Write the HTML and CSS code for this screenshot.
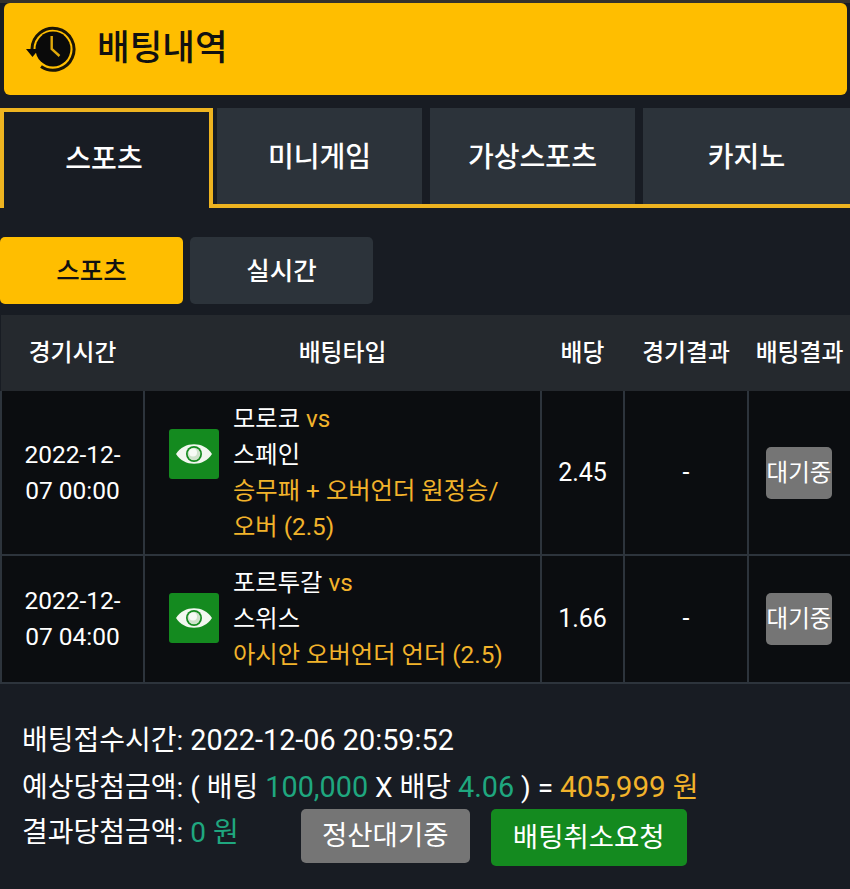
FILE: index.html
```html
<!DOCTYPE html>
<html lang="ko">
<head>
    <meta charset="UTF-8">
    <meta name="viewport" content="width=device-width, initial-scale=1.0">
    <title>배팅내역</title>
    <link rel="stylesheet" href="styles.css">
</head>
<body>
    <div class="page-title">
        <svg class="title-icon" viewBox="0 0 50 46">
            <circle cx="27" cy="23" r="17.5" fill="#0a0a0a"></circle>
            <path d="M6 23 A21 21 0 1 1 15 40.5" fill="none" stroke="#1a1505" stroke-width="3"></path>
            <path d="M0 23 H13 L6.5 31 Z" fill="#0a0a0a"></path>
            <path d="M25.7 10 V23 L33.5 30" fill="none" stroke="#e0a90a" stroke-width="2.4"></path>
        </svg>
        <h1 class="title">배팅내역</h1>
    </div>

    <div class="tabs">
        <a class="tab active">스포츠</a>
        <a class="tab">미니게임</a>
        <a class="tab">가상스포츠</a>
        <a class="tab last">카지노</a>
    </div>

    <div class="sub-tabs">
        <a class="sub-tab active">스포츠</a>
        <a class="sub-tab">실시간</a>
    </div>

    <table class="bet-table">
        <colgroup>
            <col class="col-time">
            <col class="col-type">
            <col class="col-odds">
            <col class="col-game">
            <col class="col-result">
        </colgroup>
        <thead>
            <tr>
                <th>경기시간</th>
                <th>배팅타입</th>
                <th>배당</th>
                <th>경기결과</th>
                <th>배팅결과</th>
            </tr>
        </thead>
        <tbody>
            <tr>
                <td class="time-cell">2022-12-<br>07 00:00</td>
                <td class="type-cell first">
                    <div class="type-wrap">
                        <span class="eye-btn">
                            <svg viewBox="0 0 36 24">
                                <path d="M0 12 C8 -1 28 -1 36 12 C28 25 8 25 0 12 Z" fill="#f2f7f0"></path>
                                <circle cx="18" cy="12" r="8" fill="#148a1f"></circle>
                                <circle cx="18" cy="12" r="6.3" fill="#cfe3cc"></circle>
                                <circle cx="17" cy="10.5" r="4" fill="#f7fbf6"></circle>
                            </svg>
                        </span>
                        <div class="type-text">
                            <div>모로코 <span class="gold">vs</span></div>
                            <div>스페인</div>
                            <div class="gold">승무패 + 오버언더 원정승/ 오버 (2.5)</div>
                        </div>
                    </div>
                </td>
                <td>2.45</td>
                <td>-</td>
                <td class="result-cell"><span class="wait-btn">대기중</span></td>
            </tr>
            <tr>
                <td class="time-cell">2022-12-<br>07 04:00</td>
                <td class="type-cell">
                    <div class="type-wrap">
                        <span class="eye-btn">
                            <svg viewBox="0 0 36 24">
                                <path d="M0 12 C8 -1 28 -1 36 12 C28 25 8 25 0 12 Z" fill="#f2f7f0"></path>
                                <circle cx="18" cy="12" r="8" fill="#148a1f"></circle>
                                <circle cx="18" cy="12" r="6.3" fill="#cfe3cc"></circle>
                                <circle cx="17" cy="10.5" r="4" fill="#f7fbf6"></circle>
                            </svg>
                        </span>
                        <div class="type-text">
                            <div>포르투갈 <span class="gold">vs</span></div>
                            <div>스위스</div>
                            <div class="gold">아시안 오버언더 언더 (2.5)</div>
                        </div>
                    </div>
                </td>
                <td>1.66</td>
                <td>-</td>
                <td class="result-cell"><span class="wait-btn">대기중</span></td>
            </tr>
        </tbody>
    </table>

    <div class="summary">
        <div class="summary-row">배팅접수시간: <span class="num">2022-12-06 20:59:52</span></div>
        <div class="summary-row">예상당첨금액: ( 배팅 <span class="teal num">100,000</span> X 배당 <span class="teal num">4.06</span> ) = <span class="gold"><span class="num wide">405,999</span> 원</span></div>
        <div class="summary-row actions">
            <span>결과당첨금액: <span class="teal">0 원</span></span>
            <a class="action-btn gray">정산대기중</a>
            <a class="action-btn green">배팅취소요청</a>
        </div>
    </div>
</body>
</html>
```

FILE: styles.css
```css
* { margin: 0; padding: 0; box-sizing: border-box; }
body {
    font-family: Roboto, "Noto Sans CJK KR", sans-serif;
    background: #181c23;
    color: white;
    border-top: 3px solid #35322c;
    height: 889px;
    overflow: hidden;
}
.gold { color: #f2b32b; }
.teal { color: #1fa77f; }
.num { font-size: 28.8px; }
.num.wide { font-size: 29.6px; }

.page-title {
    display: flex;
    align-items: center;
    height: 92px;
    margin: 0 3px 13px 4px;
    padding-left: 22px;
    background: #ffbe00;
    border-radius: 6px;
}
.title-icon {
    width: 50px;
    height: 46px;
    margin-right: 21px;
}
.title {
    font-size: 35.5px;
    font-weight: 500;
    line-height: 1;
    color: #111;
}

.tabs {
    display: flex;
    gap: 8px;
    height: 100px;
    border-bottom: 4px solid #eeb420;
}
.tab {
    display: flex;
    align-items: center;
    justify-content: center;
    width: 205px;
    padding-bottom: 3px;
    background: #2c333a;
    font-size: 28px;
    font-weight: 500;
}
.tab.last {
    flex: 1;
}
.tab.active {
    width: 213px;
    height: 100px;
    margin-right: -4px;
    padding: 0 5px 6px 0;
    background: #181c23;
    border: 4px solid #eeb420;
    border-bottom: none;
}

.sub-tabs {
    display: flex;
    gap: 7px;
    margin-top: 29px;
}
.sub-tab {
    display: flex;
    align-items: center;
    justify-content: center;
    width: 183px;
    height: 67px;
    padding-bottom: 4px;
    background: #2c333a;
    border-radius: 5px;
    font-size: 25.5px;
    font-weight: 500;
}
.sub-tab.active {
    background: #ffbe00;
    color: #111;
}

.bet-table {
    width: 850px;
    margin-top: 11px;
    table-layout: fixed;
    border-collapse: collapse;
    text-align: center;
}
.col-time { width: 143px; }
.col-type { width: 397px; }
.col-odds { width: 83px; }
.col-game { width: 124px; }
.col-result { width: 103px; }
.bet-table th {
    height: 76px;
    padding-bottom: 6px;
    background: #25292e;
    font-size: 23.8px;
    font-weight: 500;
}
.bet-table td {
    background: #0b0d10;
    border: 2px solid #2d343c;
    border-top: none;
    font-size: 25px;
    line-height: 36px;
    vertical-align: middle;
}
.bet-table td:last-child {
    border-right: none;
}
.bet-table td.time-cell {
    font-size: 24.5px;
}
.bet-table td.result-cell {
    padding-right: 2px;
}
.bet-table td.type-cell {
    padding: 9px 0 9px 24px;
    font-size: 24.3px;
    text-align: left;
    word-break: keep-all;
}
.bet-table td.type-cell.first {
    padding: 10px 0 9px 24px;
}
.type-wrap {
    display: flex;
    align-items: flex-start;
    gap: 14px;
}
.eye-btn {
    display: flex;
    flex: none;
    align-items: center;
    justify-content: center;
    width: 50px;
    height: 50px;
    margin-top: 28px;
    background: #148a1f;
    border-radius: 3px;
}
.eye-btn svg {
    width: 36px;
    height: 24px;
}
.wait-btn {
    display: inline-flex;
    align-items: center;
    justify-content: center;
    width: 66px;
    height: 52px;
    background: #757575;
    border-radius: 5px;
    font-size: 23.5px;
    vertical-align: middle;
}

.summary {
    padding: 33px 0 0 22px;
    font-size: 28px;
}
.summary-row {
    height: 46.5px;
    line-height: 46px;
    white-space: nowrap;
}
.actions {
    display: flex;
    align-items: flex-start;
}
.action-btn {
    display: flex;
    align-items: center;
    justify-content: center;
    height: 54px;
    margin-top: -1px;
    border-radius: 5px;
    font-size: 27.5px;
}
.action-btn.gray {
    width: 169px;
    margin-left: 62px;
    background: #757575;
}
.action-btn.green {
    width: 196px;
    height: 57px;
    margin-left: 21px;
    background: #148a1f;
}
```
